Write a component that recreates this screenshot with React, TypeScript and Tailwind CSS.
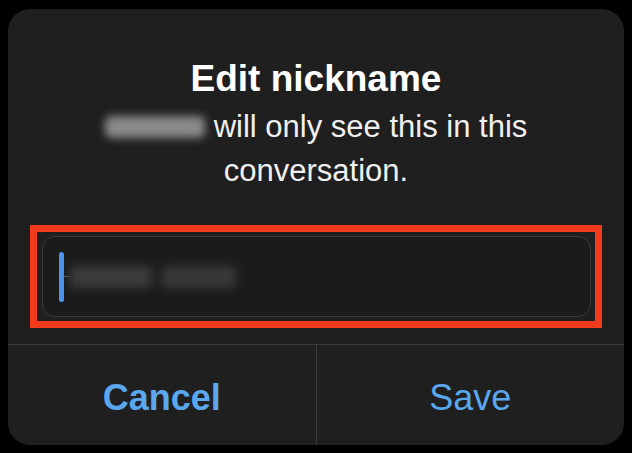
import React from "react";

export default function App() {
  return (
    <div className="w-[632px] h-[453px] bg-black overflow-hidden" style={{ fontFamily: '"Liberation Sans", Arial, sans-serif' }}>
      <div className="ml-[8px] mt-[9px] w-[616px] h-[436px] rounded-[22px] bg-[#1f1f20] flex flex-col">
        <div className="pt-[48px] text-center text-white text-[37px] leading-[44px] font-bold">
          Edit nickname
        </div>
        <div className="mt-[4px] text-center text-[#f0f0f0] text-[31px] leading-[44px]">
          <div className="flex items-center justify-center">
            <span className="inline-block w-[100px] h-[22px] rounded-md bg-[#8a8a8a] blur-[4px] mr-[9px]" />
            <span>will only see this in this</span>
          </div>
          <div>conversation.</div>
        </div>
        <div className="mt-[32px] mx-[22px] border-[7px] border-[#f23a1c] p-[4px] h-[103px]">
          <div className="h-full ml-[1px] rounded-[13px] border border-[#3b3b3d] bg-[#1b1b1c] flex items-center pl-[16px]">
            <div className="w-[5px] h-[50px] rounded-full bg-[#4e94ee]" />
            <div className="w-[6px] h-[1px] bg-[#555]" />
            <div className="flex items-center gap-[10px] blur-[5px]">
              <div className="w-[82px] h-[22px] rounded bg-[#3c3c3d]" />
              <div className="w-[74px] h-[22px] rounded bg-[#393939]" />
            </div>
          </div>
        </div>
        <div className="mt-[16px] h-px bg-[#3a3a3c]" />
        <div className="flex-1 flex">
          <div className="flex-1 flex items-center justify-center pt-[6px] text-[36px] leading-none font-bold text-[#5aa7ee]">
            Cancel
          </div>
          <div className="w-px bg-[#3a3a3c]" />
          <div className="flex-1 flex items-center justify-center pt-[6px] text-[36px] leading-none text-[#5aa7ee]">
            Save
          </div>
        </div>
      </div>
    </div>
  );
}
